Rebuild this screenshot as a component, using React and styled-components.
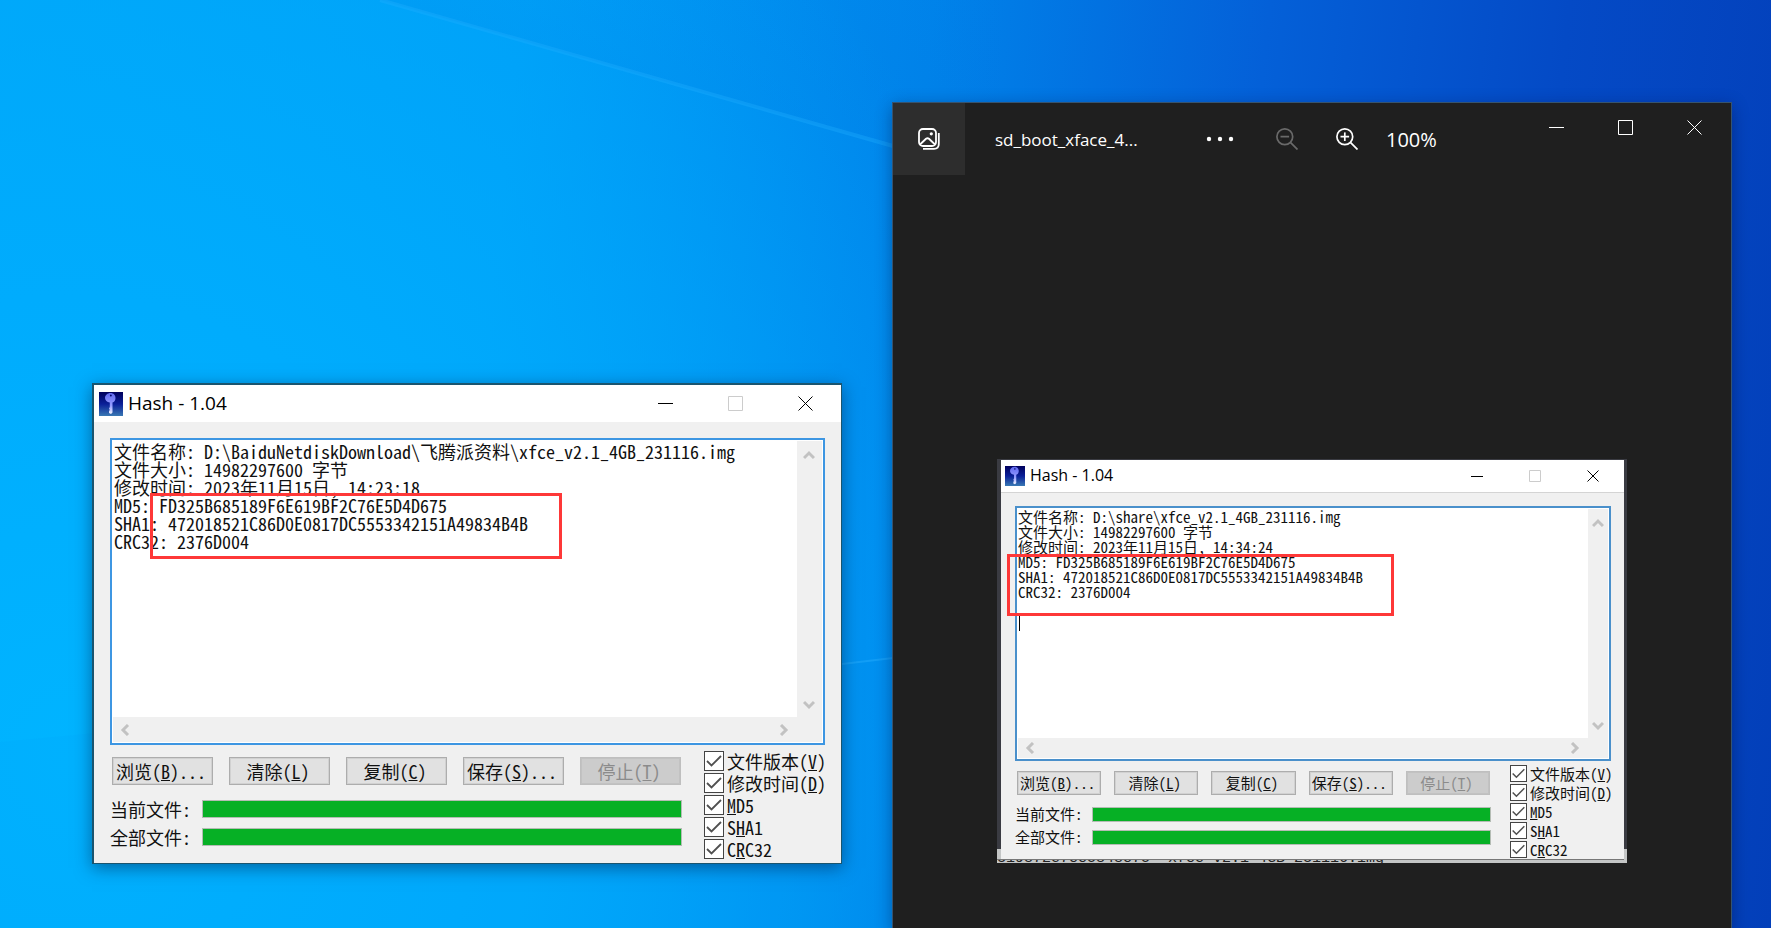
import React from 'react';
import styled, { createGlobalStyle, ThemeProvider } from 'styled-components';

const GlobalStyle = createGlobalStyle`
  * {
    box-sizing: border-box;
  }
  body {
    margin: 0;
  }
`;

const uiFont = '"Open Sans", "Noto Sans", sans-serif';
const bitmapFont = '"Noto Sans CJK SC", monospace';

const large = {
  title: 37,
  titleBorder: '0',
  icon: 24,
  iconPad: 5,
  uiText: 19,
  captionWidth: 70,
  captionIcon: 15,
  captionPad: 1,
  frame: '2px 1px 1px 2px',
  bodyPad: '16px 16px 3px',
  editor: 307,
  editorBorder: '#3d96e2',
  scroll: 25,
  text: 18,
  textPad: '1px',
  lift: 0,
  footerPad: 5,
  buttonsPad: 7,
  button: 28,
  buttonGap: 16,
  barsPad: 10,
  barRow: 28,
  bar: 18,
  label: 92,
  columnGap: 22,
  checks: 121,
  checkRow: 22,
  check: 20,
};

const small = {
  title: 33,
  titleBorder: '1px solid #d4d4d4',
  icon: 20,
  iconPad: 4,
  uiText: 16,
  captionWidth: 58,
  captionIcon: 12,
  captionPad: 2,
  frame: '0',
  bodyPad: '13px 13px 0 14px',
  editor: 255,
  editorBorder: '#4a90cb',
  scroll: 20,
  text: 15,
  textPad: '0',
  lift: 2,
  footerPad: 3,
  buttonsPad: 7,
  button: 24,
  buttonGap: 13,
  barsPad: 8,
  barRow: 23,
  bar: 15,
  label: 77,
  columnGap: 19,
  checks: 101,
  checkRow: 19,
  check: 17,
};

const Desktop = styled.main`
  position: relative;
  min-height: 100vh;
  overflow: hidden;
  background:
    radial-gradient(ellipse 58% 125% at 4% 82%, #00b4ff 0%, #00acfd 40%, rgba(0, 160, 248, 0) 100%),
    linear-gradient(96deg, #00a4f6 0%, #009cf6 28%, #0083ea 50%, #0460d8 68%, #044ac6 84%, #033fb9 100%);
`;

const Beams = styled.svg`
  display: block;
  width: 100%;
  height: 100vh;
`;

const HashPlace = styled.div`
  position: absolute;
  left: 92px;
  top: 383px;
  width: 750px;
  box-shadow: 0 4px 16px rgba(0, 30, 70, 0.5);
`;

const Frame = styled.section`
  border-style: solid;
  border-color: #1a556f;
  border-width: ${({ theme }) => theme.frame};
  background: #f0f0f0;
  color: #111;
`;

const TitleBar = styled.header`
  display: flex;
  align-items: center;
  height: ${({ theme }) => theme.title}px;
  padding-left: ${({ theme }) => theme.iconPad}px;
  padding-right: ${({ theme }) => theme.captionPad}px;
  border-bottom: ${({ theme }) => theme.titleBorder};
  background: #fff;
`;

const Title = styled.h1`
  flex: 1;
  margin: 0 0 2px 5px;
  font: 400 ${({ theme }) => theme.uiText}px ${uiFont};
  color: #000;
`;

const CaptionButton = styled.button`
  display: grid;
  place-items: center;
  width: ${({ $width }) => $width}px;
  height: ${({ $height }) => $height}px;
  padding: 0;
  border: 0;
  background: none;
  color: ${({ $color }) => $color};
`;

const Body = styled.div`
  padding: ${({ theme }) => theme.bodyPad};
`;

const Editor = styled.div`
  position: relative;
  display: grid;
  grid-template-columns: 1fr ${({ theme }) => theme.scroll}px;
  grid-template-rows: 1fr ${({ theme }) => theme.scroll}px;
  height: ${({ theme }) => theme.editor}px;
  padding: 1px;
  border: 2px solid ${({ theme }) => theme.editorBorder};
  background: #fff;
`;

const TextArea = styled.textarea`
  width: 100%;
  height: 100%;
  padding: ${({ theme }) => theme.textPad};
  border: 0;
  outline: 0;
  resize: none;
  overflow: hidden;
  white-space: pre;
  background: #fff;
  color: #111;
  font-family: ${bitmapFont};
  font-feature-settings: 'hwid';
  font-size: ${({ theme }) => theme.text}px;
  line-height: ${({ theme }) => theme.text}px;
`;

const ScrollBar = styled.div`
  display: flex;
  flex-direction: ${({ $vertical }) => ($vertical ? 'column' : 'row')};
  justify-content: space-between;
  align-items: center;
  padding: ${({ $vertical }) => ($vertical ? '8px 1px 6px 0' : '0 7px 0 6px')};
  background: #f0f0f0;
`;

const Corner = styled.div`
  background: #f0f0f0;
`;

const Highlight = styled.div`
  position: absolute;
  left: ${({ $left }) => $left}px;
  top: ${({ $top }) => $top}px;
  width: ${({ $width }) => $width}px;
  height: ${({ $height }) => $height}px;
  border: 3px solid #fe3838;
  pointer-events: none;
`;

const Caret = styled.div`
  position: absolute;
  left: 2px;
  top: 108px;
  width: 1px;
  height: 15px;
  background: #000;
`;

const Footer = styled.div`
  display: flex;
  justify-content: space-between;
  gap: ${({ theme }) => theme.columnGap}px;
  padding-top: ${({ theme }) => theme.footerPad}px;
  font-family: ${bitmapFont};
  font-feature-settings: 'hwid';
  font-size: ${({ theme }) => theme.text}px;
  line-height: ${({ theme }) => theme.text}px;
  white-space: nowrap;
`;

const Actions = styled.div`
  flex: 1;
  padding-top: ${({ theme }) => theme.buttonsPad}px;
`;

const Buttons = styled.div`
  display: flex;
  gap: ${({ theme }) => theme.buttonGap}px;
  padding: 0 1px 0 2px;
  margin-bottom: ${({ theme }) => theme.barsPad}px;
`;

const Button = styled.button`
  flex: 1 1 0;
  min-width: 0;
  height: ${({ theme }) => theme.button}px;
  padding: 0 3px ${({ theme }) => theme.lift}px 0;
  border: 1px solid #adadad;
  outline: 1px solid rgba(173, 173, 173, 0.3);
  outline-offset: -2px;
  background: #e1e1e1;
  color: #111;
  font: inherit;
  font-feature-settings: inherit;
  &:disabled {
    background: #cccccc;
    border-color: #bfbfbf;
    color: #8b8b8b;
  }
`;

const BarRow = styled.div`
  display: flex;
  align-items: center;
  height: ${({ theme }) => theme.barRow}px;
`;

const BarLabel = styled.label`
  width: ${({ theme }) => theme.label}px;
  padding-bottom: ${({ theme }) => theme.lift}px;
`;

const Progress = styled.progress`
  flex: 1;
  min-width: 0;
  height: ${({ theme }) => theme.bar}px;
  appearance: none;
  border: 1px solid #b4bcb4;
  background: #e6e6e6;
  &::-webkit-progress-bar {
    background: #e6e6e6;
  }
  &::-webkit-progress-value {
    background: #06b025;
  }
`;

const Checks = styled.div`
  width: ${({ theme }) => theme.checks}px;
`;

const CheckLabel = styled.label`
  display: flex;
  align-items: center;
  gap: 3px;
  height: ${({ theme }) => theme.checkRow}px;
`;

const CheckBox = styled.input`
  flex: none;
  appearance: none;
  width: ${({ theme }) => theme.check}px;
  height: ${({ theme }) => theme.check}px;
  margin: 0;
  border: 1px solid #444;
  background: #fff;
  &:checked {
    background: #fff
      url("data:image/svg+xml,%3Csvg xmlns='http://www.w3.org/2000/svg' viewBox='0 0 18 18'%3E%3Cpath d='M2 9l4.500 4.500L16 4' fill='none' stroke='%23505050' stroke-width='1.800'/%3E%3C/svg%3E")
      center / 100% no-repeat;
  }
`;

const Photos = styled.section`
  position: absolute;
  left: 893px;
  top: 103px;
  bottom: 0;
  width: 838px;
  background: #1f1f1f;
  box-shadow: 0 0 0 1px #36536f, 0 4px 16px rgba(0, 15, 60, 0.45);
  color: #fff;
  font-family: ${uiFont};
`;

const PhotosBar = styled.header`
  display: flex;
  align-items: center;
  height: 72px;
`;

const ToolButton = styled.button`
  display: grid;
  place-items: center;
  width: ${({ $width }) => $width}px;
  height: 72px;
  padding: 0;
  border: 0;
  background: ${({ $active }) => ($active ? '#2d2d2d' : 'none')};
  color: #fff;
  &:disabled {
    color: #696969;
  }
`;

const FileName = styled.h2`
  width: 195px;
  margin: 0 0 0 30px;
  font-size: 17px;
  font-weight: 400;
`;

const ZoomLevel = styled.span`
  padding-left: 16px;
  font-size: 20px;
`;

const Captions = styled.div`
  display: flex;
  align-self: flex-start;
  margin-left: auto;
  padding-right: 2px;
`;

const Canvas = styled.div`
  display: flex;
  justify-content: center;
  padding-top: 284px;
`;

const Picture = styled.div`
  width: 630px;
  padding: 1px 3px 0 4px;
  background: linear-gradient(#3a3b42 0 390px, #c4c6c6 390px);
`;

const ClippedLine = styled.div`
  display: flex;
  align-items: flex-end;
  height: 4px;
  margin-left: -4px;
  overflow: hidden;
  border-top: 1px solid #777;
  color: #222;
  font: 15px/8px "Liberation Mono", monospace;
  white-space: pre;
`;

function KeyIcon({ size }) {
  return (
    <svg width={size} height={size} viewBox="0 0 24 24">
      <defs>
        <linearGradient id={`key${size}`} x1="0" y1="0" x2="0" y2="1">
          <stop offset="0" stopColor="#00005c" />
          <stop offset="0.5" stopColor="#0a1f98" />
          <stop offset="1" stopColor="#3979b4" />
        </linearGradient>
        <linearGradient id={`blade${size}`} x1="0" y1="0" x2="0" y2="1">
          <stop offset="0" stopColor="#6068f0" />
          <stop offset="0.6" stopColor="#959dff" />
          <stop offset="1" stopColor="#f4f6ff" />
        </linearGradient>
      </defs>
      <rect width="24" height="24" fill={`url(#key${size})`} />
      <path
        fill={`url(#blade${size})`}
        fillRule="evenodd"
        d="M11.500 1c3.200 0 5 2.200 5 5 0 2.300-1.200 4-3 4.600V20.500l-1.500 1.500-2-1v-2l.8-1-.8-1.500.8-1.500v-4.400C8 10 6 8.300 6 6c0-2.800 2.500-5 5.500-5zm.3 1.600a.9.9 0 1 0 .1 0z"
      />
    </svg>
  );
}

function CaptionIcon({ kind, size }) {
  const end = size - 0.5;
  const paths = {
    minimize: `M0 ${Math.floor(size / 2) + 0.5}H${size}`,
    maximize: `M.5 .5H${end}V${end}H.5Z`,
    close: `M.5 .5L${end} ${end}M${end} .5L.5 ${end}`,
  };
  return (
    <svg width={size} height={size} fill="none" stroke="currentColor">
      <path d={paths[kind]} />
    </svg>
  );
}

function Arrow({ turn }) {
  return (
    <svg width="12" height="12" viewBox="0 0 12 12" fill="none" stroke="#c2c2c2" strokeWidth="3">
      <path d="M1 9l5-5 5 5" transform={`rotate(${turn} 6 6)`} />
    </svg>
  );
}

function GalleryIcon() {
  return (
    <svg width="22" height="22" viewBox="0 0 22 22" fill="none" stroke="currentColor" strokeWidth="1.800">
      <rect x="1" y="1" width="17" height="17" rx="4" />
      <path d="M2 16.500l6-5.700q1.500-1.200 3 0l6 5.700M20.800 5v11q0 4.800-4.800 4.800H5" />
      <circle cx="13.300" cy="5.800" r="1.600" fill="currentColor" stroke="none" />
    </svg>
  );
}

function ZoomIcon({ plus }) {
  return (
    <svg width="22" height="22" viewBox="0 0 22 22" fill="none" stroke="currentColor" strokeWidth="1.700">
      <circle cx="8.800" cy="8.800" r="7.900" />
      <path d="M14.400 14.400L21.500 21.500M4.500 8.700h8.600" />
      {plus && <path d="M8.800 4.400V13" />}
    </svg>
  );
}

const buttons = [
  ['浏览', 'B', '...'],
  ['清除', 'L', ''],
  ['复制', 'C', ''],
  ['保存', 'S', '...'],
  ['停止', 'T', ''],
];

const checks = [
  ['文件版本(', 'V', ')'],
  ['修改时间(', 'D', ')'],
  ['', 'M', 'D5'],
  ['S', 'H', 'A1'],
  ['C', 'R', 'C32'],
];

function report(path, time) {
  return [
    `文件名称: ${path}`,
    '文件大小: 14982297600 字节',
    `修改时间: 2023年11月15日, ${time}`,
    'MD5: FD325B685189F6E619BF2C76E5D4D675',
    'SHA1: 472018521C86D0E0817DC5553342151A49834B4B',
    'CRC32: 2376D004',
    '',
    '',
  ].join('\n');
}

function HashWindow({ id, metrics, path, time, children }) {
  return (
    <ThemeProvider theme={metrics}>
      <Frame>
        <TitleBar>
          <KeyIcon size={metrics.icon} />
          <Title>Hash - 1.04</Title>
          {['minimize', 'maximize', 'close'].map((kind) => (
            <CaptionButton
              key={kind}
              aria-label={kind}
              disabled={kind === 'maximize'}
              $width={metrics.captionWidth}
              $height={metrics.title - 3}
              $color={kind === 'maximize' ? '#cccccc' : '#000'}
            >
              <CaptionIcon kind={kind} size={metrics.captionIcon} />
            </CaptionButton>
          ))}
        </TitleBar>
        <Body>
          <Editor>
            <TextArea aria-label="Hash" spellCheck={false} readOnly value={report(path, time)} />
            <ScrollBar $vertical>
              <Arrow turn={0} />
              <Arrow turn={180} />
            </ScrollBar>
            <ScrollBar>
              <Arrow turn={270} />
              <Arrow turn={90} />
            </ScrollBar>
            <Corner />
            {children}
          </Editor>
          <Footer>
            <Actions>
              <Buttons>
                {buttons.map(([text, key, dots]) => (
                  <Button key={key} disabled={key === 'T'}>
                    {text}(<u>{key}</u>){dots}
                  </Button>
                ))}
              </Buttons>
              {['当前文件:', '全部文件:'].map((text, i) => (
                <BarRow key={text}>
                  <BarLabel htmlFor={`${id}-bar-${i}`}>{text}</BarLabel>
                  <Progress id={`${id}-bar-${i}`} value="100" max="100" />
                </BarRow>
              ))}
            </Actions>
            <Checks>
              {checks.map(([before, key, after]) => (
                <CheckLabel key={key}>
                  <CheckBox type="checkbox" defaultChecked />
                  <span>
                    {before}
                    <u>{key}</u>
                    {after}
                  </span>
                </CheckLabel>
              ))}
            </Checks>
          </Footer>
        </Body>
      </Frame>
    </ThemeProvider>
  );
}

function App() {
  return (
    <Desktop>
      <GlobalStyle />
      <Beams viewBox="0 0 1771 928" preserveAspectRatio="none">
        <defs>
          <linearGradient id="beam" gradientUnits="userSpaceOnUse" x1="640" y1="74" x2="690" y2="-100">
            <stop offset="0" stopColor="#0078e0" stopOpacity="0.160" />
            <stop offset="1" stopColor="#0078e0" stopOpacity="0" />
          </linearGradient>
        </defs>
        <path d="M380 0L1000 177V0Z" fill="url(#beam)" />
        <path d="M380 0L893 146" stroke="#20b0ff" strokeWidth="4" strokeOpacity="0.350" />
        <path d="M0 742L893 658V928H0Z" fill="#0090f0" fillOpacity="0.060" />
        <path d="M842 664L893 658" stroke="#2cb2ff" strokeWidth="2" strokeOpacity="0.400" />
      </Beams>
      <HashPlace>
        <HashWindow
          id="local"
          metrics={large}
          path="D:\BaiduNetdiskDownload\飞腾派资料\xfce_v2.1_4GB_231116.img"
          time="14:23:18"
        >
          <Highlight $left={38} $top={53} $width={412} $height={66} />
        </HashWindow>
      </HashPlace>
      <Photos>
        <PhotosBar>
          <ToolButton $width={72} $active aria-label="gallery">
            <GalleryIcon />
          </ToolButton>
          <FileName>sd_boot_xface_4...</FileName>
          <ToolButton $width={60} aria-label="more">
            <svg width="28" height="6" fill="currentColor">
              <circle cx="3" cy="3" r="2.200" />
              <circle cx="14" cy="3" r="2.200" />
              <circle cx="25" cy="3" r="2.200" />
            </svg>
          </ToolButton>
          <ToolButton $width={74} aria-label="zoom out" disabled>
            <ZoomIcon />
          </ToolButton>
          <ToolButton $width={46} aria-label="zoom in">
            <ZoomIcon plus />
          </ToolButton>
          <ZoomLevel>100%</ZoomLevel>
          <Captions>
            {['minimize', 'maximize', 'close'].map((kind) => (
              <CaptionButton key={kind} aria-label={kind} $width={69} $height={48} $color="#fff">
                <CaptionIcon kind={kind} size={15} />
              </CaptionButton>
            ))}
          </Captions>
        </PhotosBar>
        <Canvas>
          <Picture>
            <HashWindow
              id="shared"
              metrics={small}
              path="D:\share\xfce_v2.1_4GB_231116.img"
              time="14:34:24"
            >
              <Highlight $left={-10} $top={46} $width={387} $height={62} />
              <Caret />
            </HashWindow>
            <ClippedLine>319872e7cc5848c75 *xfce-v2.1-4GB-231116.img</ClippedLine>
          </Picture>
        </Canvas>
      </Photos>
    </Desktop>
  );
}

export default App;
